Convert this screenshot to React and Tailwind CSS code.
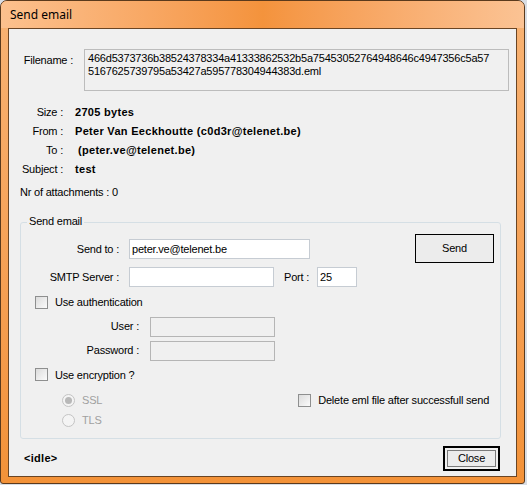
import React from 'react'

const FONT = { fontFamily: '"Liberation Sans", Arial, sans-serif' }

function Check() {
  return (
    <span className="w-[13px] h-[13px] border border-[#8e8f8f] bg-gradient-to-br from-[#dcdcdc] to-[#fbfbfb] inline-block shrink-0" />
  )
}

function Radio({ checked }) {
  return (
    <span className="w-[13px] h-[13px] rounded-full border border-[#c4c4c4] bg-[#f4f4f4] flex items-center justify-center shrink-0">
      {checked && <span className="w-[7px] h-[7px] rounded-full bg-[#b8b8b8]" />}
    </span>
  )
}

function Field({ w, value, disabled }) {
  return (
    <div
      className={`h-[20px] border px-[2px] flex items-center text-[11px] ${
        disabled ? 'bg-[#f0f0f0] border-[#b5b5b5]' : 'bg-white border-[#c6ccd3]'
      }`}
      style={{ width: w }}
    >
      {value}
    </div>
  )
}

export default function App() {
  return (
    <div className="w-[527px] h-[485px] bg-[#d8dde4]" style={FONT}>
      <div className="w-[525px] h-[484px] rounded-t-[7px] rounded-b-[3px] border border-[#5b3a1c] bg-gradient-to-b from-[#f8b374] to-[#f39238] flex flex-col overflow-hidden">
        {/* title bar */}
        <div className="h-[27px] shrink-0 bg-gradient-to-r from-[#fcc18e] via-[#f4933c] to-[#fbc394] flex items-center pl-[9px]">
          <span className="text-[12px] text-black" style={{ fontFamily: '"Noto Sans", "Open Sans", sans-serif' }}>Send email</span>
        </div>

        {/* client */}
        <div className="mx-[7px] h-[449px] border border-[#6a4524] bg-[#f0f0f0] text-[11px] tracking-[-0.2px] text-black">
          <div className="pt-[20px] pl-[8px] flex">
            <span className="w-[56px] text-right pt-[3px]">Filename :</span>
            <div className="ml-[11px] w-[425px] h-[42px] border border-[#bcbcbc] bg-[#f0f0f0] px-[3px] pt-[2px] leading-[13px] whitespace-nowrap overflow-hidden">
              <div>466d5373736b38524378334a41333862532b5a75453052764948646c4947356c5a57</div>
              <div>5167625739795a53427a595778304944383d.eml</div>
            </div>
          </div>

          <div className="mt-[15px] flex flex-col gap-[6px] leading-[13px]">
            <div className="flex">
              <span className="w-[54px] text-right">Size :</span>
              <span className="ml-[12px] font-bold tracking-[0.3px]">2705 bytes</span>
            </div>
            <div className="flex">
              <span className="w-[54px] text-right">From :</span>
              <span className="ml-[12px] font-bold tracking-[0.3px]">Peter Van Eeckhoutte (c0d3r@telenet.be)</span>
            </div>
            <div className="flex">
              <span className="w-[54px] text-right">To :</span>
              <span className="ml-[15px] font-bold tracking-[0.3px]">(peter.ve@telenet.be)</span>
            </div>
            <div className="flex">
              <span className="w-[54px] text-right">Subject :</span>
              <span className="ml-[12px] font-bold tracking-[0.3px]">test</span>
            </div>
          </div>

          <div className="mt-[10px] pl-[11px] leading-[13px]">Nr of attachments : 0</div>

          {/* group box */}
          <div className="mt-[23px] ml-[11px] w-[481px] h-[217px] border border-[#d5dfe5] rounded-[3px] relative">
            <span className="absolute -top-[8px] left-[6px] px-[2px] bg-[#f0f0f0] leading-[13px]">Send email</span>

            <div className="flex pt-[11px]">
              <div className="flex flex-col gap-[8px] pt-[5px]">
                <div className="flex items-center">
                  <span className="w-[98px] text-right">Send to :</span>
                  <span className="ml-[10px]"><Field w={181} value="peter.ve@telenet.be" /></span>
                </div>
                <div className="flex items-center">
                  <span className="w-[98px] text-right">SMTP Server :</span>
                  <span className="ml-[10px]"><Field w={145} value="" /></span>
                  <span className="ml-[10px]">Port :</span>
                  <span className="ml-[8px]"><Field w={40} value="25" /></span>
                </div>
              </div>
              <button className="ml-auto mr-[6px] w-[79px] h-[29px] border border-black bg-[#ececec] text-[11px]">Send</button>
            </div>

            <div className="mt-[7px] ml-[14px] flex items-center gap-[7px]">
              <Check />
              <span>Use authentication</span>
            </div>

            <div className="mt-[6px] flex flex-col gap-[4px]">
              <div className="flex items-center">
                <span className="w-[118px] text-right">User :</span>
                <span className="ml-[11px]"><Field w={125} disabled /></span>
              </div>
              <div className="flex items-center">
                <span className="w-[118px] text-right">Password :</span>
                <span className="ml-[11px]"><Field w={125} disabled /></span>
              </div>
            </div>

            <div className="mt-[6px] ml-[14px] flex items-center gap-[7px]">
              <Check />
              <span>Use encryption ?</span>
            </div>

            <div className="flex mt-[11px]">
              <div className="ml-[41px] flex flex-col gap-[7px] text-[#a0a0a0]">
                <div className="h-[13px] flex items-center gap-[7px]">
                  <Radio checked />
                  <span>SSL</span>
                </div>
                <div className="h-[13px] flex items-center gap-[7px]">
                  <Radio />
                  <span>TLS</span>
                </div>
              </div>
              <div className="ml-[196px] h-[13px] flex items-center gap-[7px] whitespace-nowrap">
                <Check />
                <span>Delete eml file after successfull send</span>
              </div>
            </div>
          </div>

          <div className="flex items-center mt-[7px]">
            <span className="ml-[15px] font-bold tracking-[0.3px]">&lt;idle&gt;</span>
            <div className="ml-auto mr-[16px] w-[57px] h-[25px] border-2 border-black p-[2px]">
              <button className="w-full h-full border border-[#7a7a7a] bg-[#ececec] text-[11px] leading-none">Close</button>
            </div>
          </div>
        </div>
      </div>
    </div>
  )
}
